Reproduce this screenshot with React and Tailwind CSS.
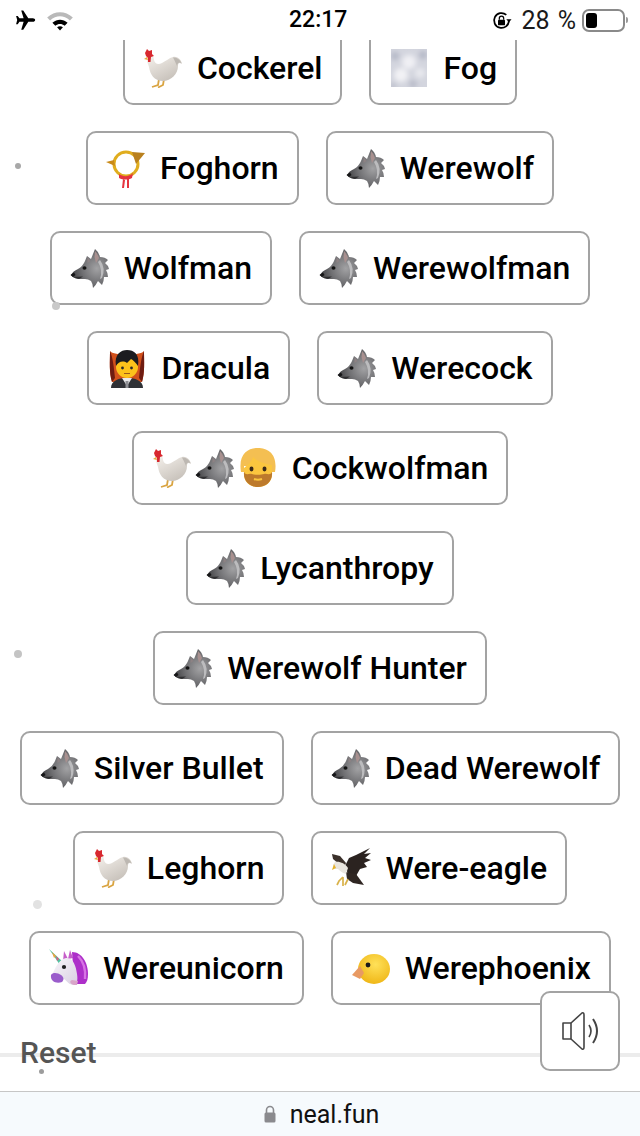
const Wolf = () => (
  <svg viewBox="0 0 40 40" className="w-full h-full">
    <defs>
      <radialGradient id="wolfFill" cx="0.68" cy="0.5" r="0.7">
        <stop offset="0" stopColor="#a2a2a4" />
        <stop offset="0.55" stopColor="#707073" />
        <stop offset="1" stopColor="#404043" />
      </radialGradient>
    </defs>
    <path
      d="M1 27 Q3 23 8 21 Q13 18 15 13 L17 8 L21 11 L25 1 Q29 4 30 9 Q35 9 38 12 L35 15 Q38 17 39 21 L36 22 Q38 25 38 29 L34 29 Q34 33 32 37 L28 33 Q26 37 23 40 Q23 36 21 33 Q18 31 15 31 L8 31 Q3 30 1 27 Z"
      fill="url(#wolfFill)"
    />
    <path d="M25 3 Q28 6 29 10 L26 15 L24.5 9 Z" fill="#a8908f" />
    <path d="M17.5 9 L20.5 13 L17.5 15 Z" fill="#8d8284" />
    <path d="M30 12 Q36 20 32 30 L30 31 Q33 22 28 14 Z" fill="#bcbcbe" />
    <ellipse cx="14.5" cy="20" rx="2" ry="1.7" fill="#111" />
    <path d="M0.5 27 L4 24.5 L5.5 27 L3 29 Z" fill="#161618" />
    <path d="M3 29 L13 28.5 L9 31 Z" fill="#2f2f31" />
  </svg>
);

const Rooster = () => (
  <svg viewBox="0 0 40 40" className="w-full h-full">
    <defs>
      <linearGradient id="roosterFill" x1="0" y1="0" x2="0.7" y2="1">
        <stop offset="0" stopColor="#f7f3ee" />
        <stop offset="1" stopColor="#c5bfb8" />
      </linearGradient>
    </defs>
    <path d="M16 31 L15 37 L9 39 M21 31 L20 37 L15 39.5" stroke="#d9a441" strokeWidth="1.8" fill="none" />
    <path
      d="M4 8 C8 5 11 8 11 12 C12 16 15 17 19 15 C23 13 26 10 30 9 C34 8 38 11 39 16 C36 14 35 15 35 18 C35 26 28 33 20 33 C11 33 7 26 6 19 C5 15 3 13 4 8 Z"
      fill="url(#roosterFill)"
    />
    <path d="M30 9.5 C33 9 37 11 38.5 15 C36 13.5 34.5 15 34 18 Q32 13 30 9.5 Z" fill="#bdb8b2" />
    <path d="M2 5 L4 1 L6 3 L9 2 L9 6 L11 8 L8 9 L7.5 14 L5 14 L5 10 L3 8 Z" fill="#d8282f" />
    <path d="M4 9 L1 11 L5 12 Z" fill="#e8a93c" />
  </svg>
);

const Fog = () => (
  <svg viewBox="0 0 40 40" className="w-full h-full">
    <defs>
      <filter id="fogBlur">
        <feGaussianBlur stdDeviation="2.5" />
      </filter>
      <clipPath id="fogClip">
        <rect x="2" y="1" width="36" height="38" />
      </clipPath>
    </defs>
    <g clipPath="url(#fogClip)">
      <rect x="2" y="1" width="36" height="38" fill="#d3d5de" />
      <g filter="url(#fogBlur)">
        <circle cx="20" cy="14" r="7" fill="#f0f0f4" />
        <circle cx="12" cy="27" r="7" fill="#f2f2f5" />
        <circle cx="31" cy="25" r="5" fill="#e8e9ee" />
        <circle cx="6" cy="8" r="4" fill="#b4b7c6" />
        <circle cx="34" cy="7" r="4" fill="#b4b7c6" />
        <circle cx="24" cy="36" r="4" fill="#b9bcc9" />
        <circle cx="4" cy="38" r="3" fill="#b9bcc9" />
      </g>
    </g>
  </svg>
);

const Horn = () => (
  <svg viewBox="0 0 40 40" className="w-full h-full">
    <circle cx="20" cy="16" r="12" fill="none" stroke="#e0ad1e" strokeWidth="3" />
    <path d="M0 14 L8 12 L9 18 Z" fill="#c98a18" />
    <path d="M26 4 L39 5 L30 16 Z" fill="#b9801e" />
    <path d="M13 26 C17 29 23 29 27 25 L26 30 C22 32 17 32 13 30 Z" fill="#e5343f" />
    <path d="M17 31 L16 40 L18 40 L19 32 Z M21 31 L21 40 L23 40 L23 31 Z" fill="#e5343f" />
  </svg>
);

const Vampire = () => (
  <svg viewBox="0 0 40 40" className="w-full h-full">
    <path d="M3 3 C7 8 33 8 37 3 C37 14 38 24 35 34 L5 34 C2 24 3 14 3 3 Z" fill="#d2511c" />
    <path d="M3 3 C3 14 2 24 5 34 L8 30 C7 20 6 10 3 3 Z M37 3 C37 14 38 24 35 34 L32 30 C33 20 34 10 37 3 Z" fill="#6e1c12" />
    <path d="M4 40 C4 33 11 30 20 30 C29 30 36 33 36 40 Z" fill="#2f3136" />
    <path d="M15 30 L20 38 L25 30 Z" fill="#e8e8ea" />
    <rect x="18.5" y="33" width="3" height="7" fill="#8e8f94" />
    <circle cx="20" cy="19" r="11" fill="#fcc21b" />
    <path d="M9 18 C7 6 14 2 20 2 C27 2 33 6 31 18 C29 15 26 12 24 11 L20 15 C16 12 11 14 9 18 Z" fill="#1b1b1f" />
    <circle cx="15.5" cy="20" r="1.4" fill="#2a2a2a" />
    <circle cx="24.5" cy="20" r="1.4" fill="#2a2a2a" />
    <path d="M17 25.5 L23 25.5" stroke="#9c5a1c" strokeWidth="1" />
  </svg>
);

const Man = () => (
  <svg viewBox="0 0 40 40" className="w-full h-full">
    <path d="M3 24 C0 6 10 0 20 0 C30 0 40 6 37 24 L34 24 L34 18 L6 18 L6 24 Z" fill="#f4bf52" />
    <path d="M6 20 C10 17 14 13 15 9 C20 14 28 16 34 17 L34 26 C34 35 27 39 20 39 C13 39 6 35 6 26 Z" fill="#fbc63f" />
    <path d="M6 24 C8 28 11 25 14 26 C17 27 23 27 26 26 C29 25 32 28 34 24 C35 33 28 39 20 39 C12 39 5 33 6 24 Z" fill="#bd7a2c" />
    <ellipse cx="13.5" cy="21" rx="2" ry="2.4" fill="#3b2a1a" />
    <ellipse cx="26.5" cy="21" rx="2" ry="2.4" fill="#3b2a1a" />
    <path d="M16 31 Q20 32.5 24 31" stroke="#fbc63f" strokeWidth="2" fill="none" />
  </svg>
);

const Eagle = () => (
  <svg viewBox="0 0 40 40" className="w-full h-full">
    <path d="M14 18 L18 10 L25 7 L39 0 L33 6 L40 5 L34 10 L40 12 L33 15 L36 19 L29 21 L25 28 L17 26 Z" fill="#2b2320" />
    <path d="M15 24 L25 26 L33 37 L22 35 L16 31 Z" fill="#2f2622" />
    <path d="M1 6 L9 8 L15 15 L13 20 L8 16 L2 11 Z" fill="#3b302a" />
    <path d="M4 14 C8 13 14 15 17 20 L15 26 C11 25 8 22 7 21 L4 21 L2 17 Z" fill="#e9e5de" />
    <path d="M3 16 L1 22 L5 20 Z" fill="#e4b12c" />
    <path d="M12 29 L8 33 L6 37 M12 29 L12 38 M17 31 L14 37" stroke="#d9b24a" strokeWidth="1.7" fill="none" />
  </svg>
);

const Unicorn = () => (
  <svg viewBox="0 0 40 40" className="w-full h-full">
    <defs>
      <linearGradient id="uniHead" x1="0" y1="0" x2="1" y2="1">
        <stop offset="0" stopColor="#f8f6fa" />
        <stop offset="1" stopColor="#d9cfe2" />
      </linearGradient>
    </defs>
    <path d="M0 1 L14 14 L11 17 Z" fill="#4fc3a1" />
    <path d="M3 4 L7 8 L5 10 Z" fill="#f0a23c" />
    <path d="M7 8 L10 11 L8 13 Z" fill="#e1557f" />
    <path d="M15 3 L19 11 L14 13 Z M21 2 L24 10 L19 11 Z" fill="#c65ec9" />
    <path d="M23 4 C33 4 39 15 39 26 C39 31 38 34 36 36 L28 36 L24 18 Z" fill="#ad2fc9" />
    <path d="M29 8 C34 13 37 21 36 31" stroke="#d774e4" strokeWidth="2.4" fill="none" />
    <path d="M4 25 C7 18 11 11 17 10 C24 9 27 18 28 26 C29 32 28 36 25 37 C20 37 18 33 15 31 C10 34 3 33 3 29 Z" fill="url(#uniHead)" />
    <path d="M2 27 C4 24 9 25 12 27 C15 29 15 32 13 34 C8 36 1 34 2 27 Z" fill="#9a5ccb" />
    <circle cx="15" cy="19" r="2.1" fill="#1d1d1f" />
    <path d="M25 37 C21 36 20 33 23 32 L29 33 L28 37 Z" fill="#d9a5c9" />
  </svg>
);

const Chick = () => (
  <svg viewBox="0 0 40 40" className="w-full h-full">
    <defs>
      <radialGradient id="chickFill" cx="0.55" cy="0.35" r="0.75">
        <stop offset="0" stopColor="#ffe159" />
        <stop offset="1" stopColor="#edb10e" />
      </radialGradient>
    </defs>
    <ellipse cx="23" cy="21" rx="16" ry="15" fill="url(#chickFill)" />
    <path d="M1 27 L9 18 L13 25 L9 31 Z" fill="#e89a63" />
    <circle cx="17" cy="17" r="2.4" fill="#1a1a1a" />
  </svg>
);

const items = [
  [["Foghorn", [Horn]], ["Werewolf", [Wolf]]],
  [["Wolfman", [Wolf]], ["Werewolfman", [Wolf]]],
  [["Dracula", [Vampire]], ["Werecock", [Wolf]]],
  [["Cockwolfman", [Rooster, Wolf, Man]]],
  [["Lycanthropy", [Wolf]]],
  [["Werewolf Hunter", [Wolf]]],
  [["Silver Bullet", [Wolf]], ["Dead Werewolf", [Wolf]]],
  [["Leghorn", [Rooster]], ["Were-eagle", [Eagle]]],
  [["Wereunicorn", [Unicorn]], ["Werephoenix", [Chick]]],
];

function Chip({ label, icons }) {
  return (
    <div className="h-[74px] flex items-center pl-[18px] pr-[18px] bg-white border-2 border-[#a3a3a3] rounded-[10px] shrink-0">
      <div className="flex gap-[3px] mr-[14px]">
        {icons.map((Icon, i) => (
          <div key={i} className="w-[40px] h-[40px]">
            <Icon />
          </div>
        ))}
      </div>
      <span className="text-[32px] leading-none font-medium text-black">{label}</span>
    </div>
  );
}

function Row({ chips }) {
  return (
    <div className="flex justify-center gap-[27px]">
      {chips.map(([label, icons]) => (
        <Chip key={label} label={label} icons={icons} />
      ))}
    </div>
  );
}

function Dot({ className }) {
  return <div className={"absolute rounded-full " + className} />;
}

export default function App() {
  return (
    <div
      className="w-[640px] h-[1136px] flex flex-col bg-white overflow-hidden"
      style={{ fontFamily: "Roboto, 'Liberation Sans', sans-serif" }}
    >
      <div className="h-[40px] shrink-0 flex items-center justify-between relative pl-[15px] pr-[12px] text-black">
        <div className="flex items-center gap-[9px]">
          <svg viewBox="0 0 24 24" className="w-[22px] h-[22px]" fill="#000">
            <path d="M22 12 C22 10.8 20.8 10 19.5 10 L14.5 10 L9 1.5 L6.8 1.5 L9.4 10 L4.8 10 L3 7.5 L1.2 7.5 L2.4 12 L1.2 16.5 L3 16.5 L4.8 14 L9.4 14 L6.8 22.5 L9 22.5 L14.5 14 L19.5 14 C20.8 14 22 13.2 22 12 Z" />
          </svg>
          <svg viewBox="0 0 24 18" className="w-[28px] h-[21px]">
            <path d="M1 6.5 C7.5 0.5 16.5 0.5 23 6.5 L20.5 9 C15 4.2 9 4.2 3.5 9 Z" fill="#b9b9b9" />
            <path d="M5.5 11 C9.5 7.6 14.5 7.6 18.5 11 L16 13.5 C13.5 11.6 10.5 11.6 8 13.5 Z" fill="#000" />
            <path d="M9.5 14.8 C11 13.6 13 13.6 14.5 14.8 L12 17.5 Z" fill="#000" />
          </svg>
        </div>
        <div className="absolute left-[289px] top-[6px] text-[23px] leading-[28px] font-medium">22:17</div>
        <div className="flex items-center">
          <svg viewBox="0 0 24 24" className="w-[21px] h-[21px] mr-[9px]" fill="none" stroke="#000" strokeWidth="2">
            <path d="M20.5 12 A8.5 8.5 0 1 1 17.5 5.5" />
            <path d="M23.5 10.5 L20.5 14 L17.5 10.5 Z" fill="#000" stroke="none" />
            <rect x="8" y="11" width="8" height="6.5" rx="1" fill="#000" stroke="none" />
            <path d="M9.5 11 V9.5 A2.5 2.5 0 0 1 14.5 9.5 V11" strokeWidth="1.4" />
          </svg>
          <span className="text-[25px] leading-none mr-[6px] text-[#1a1a1a] [word-spacing:2px]">28 %</span>
          <div className="w-[43px] h-[23px] border-2 border-[#8a8a8a] rounded-[7px] p-[2px] bg-white">
            <div className="w-[11px] h-full bg-black rounded-[3px]" />
          </div>
          <div className="w-[2px] h-[6px] bg-[#9a9a9a] ml-[1px] rounded-r-full" />
        </div>
      </div>

      <div className="relative flex-1 overflow-hidden">
        <div className="flex flex-col gap-[26px] -mt-[9px]">
          <Row chips={[["Cockerel", [Rooster]], ["Fog", [Fog]]]} />
          {items.map((chips, i) => (
            <Row key={i} chips={chips} />
          ))}
        </div>

        <Dot className="left-[15px] top-[123px] w-[6px] h-[6px] bg-[#a8a8a8]" />
        <Dot className="left-[52px] top-[262px] w-[8px] h-[8px] bg-[#c9c9c9]" />
        <Dot className="left-[14px] top-[610px] w-[8px] h-[8px] bg-[#c4c4c4]" />
        <Dot className="left-[33px] top-[860px] w-[9px] h-[9px] bg-[#e2e2e2]" />
        <Dot className="left-[39px] top-[1029px] w-[5px] h-[5px] bg-[#9c9c9c]" />

        <div className="absolute left-0 right-0 top-[1013px] h-[4px] bg-[#ececec]" />
        <div className="absolute left-[20px] top-[996px] text-[30px] leading-[34px] font-medium text-[#555]">Reset</div>
        <div className="absolute left-[540px] top-[951px] w-[80px] h-[80px] bg-white border-2 border-[#a3a3a3] rounded-[10px] flex items-center justify-center">
          <svg viewBox="0 0 40 40" className="w-[40px] h-[40px]" fill="none" stroke="#444" strokeWidth="1.6" strokeLinejoin="round">
            <path d="M3 12 H11 V28 H3 Z" />
            <path d="M11 12 L22 2 Q24 1 24 4 V36 Q24 39 22 38 L11 28" />
            <path d="M29 14 Q33 20 29 26" />
            <path d="M33 8 Q41 20 33 32" strokeWidth="2" />
          </svg>
        </div>
      </div>

      <div className="h-[45px] shrink-0 border-t border-[#c6c6c6] bg-[#f6fafd] flex items-center justify-center gap-[14px] pl-[3px]">
        <svg viewBox="0 0 12 18" className="w-[12px] h-[18px]">
          <path d="M2.5 8 V5 A3.5 3.5 0 0 1 9.5 5 V8" fill="none" stroke="#8a8a8e" strokeWidth="1.6" />
          <rect x="0.5" y="7.5" width="11" height="10" rx="1.5" fill="#8a8a8e" />
        </svg>
        <span className="text-[25px] leading-none text-[#111]">neal.fun</span>
      </div>
    </div>
  );
}
